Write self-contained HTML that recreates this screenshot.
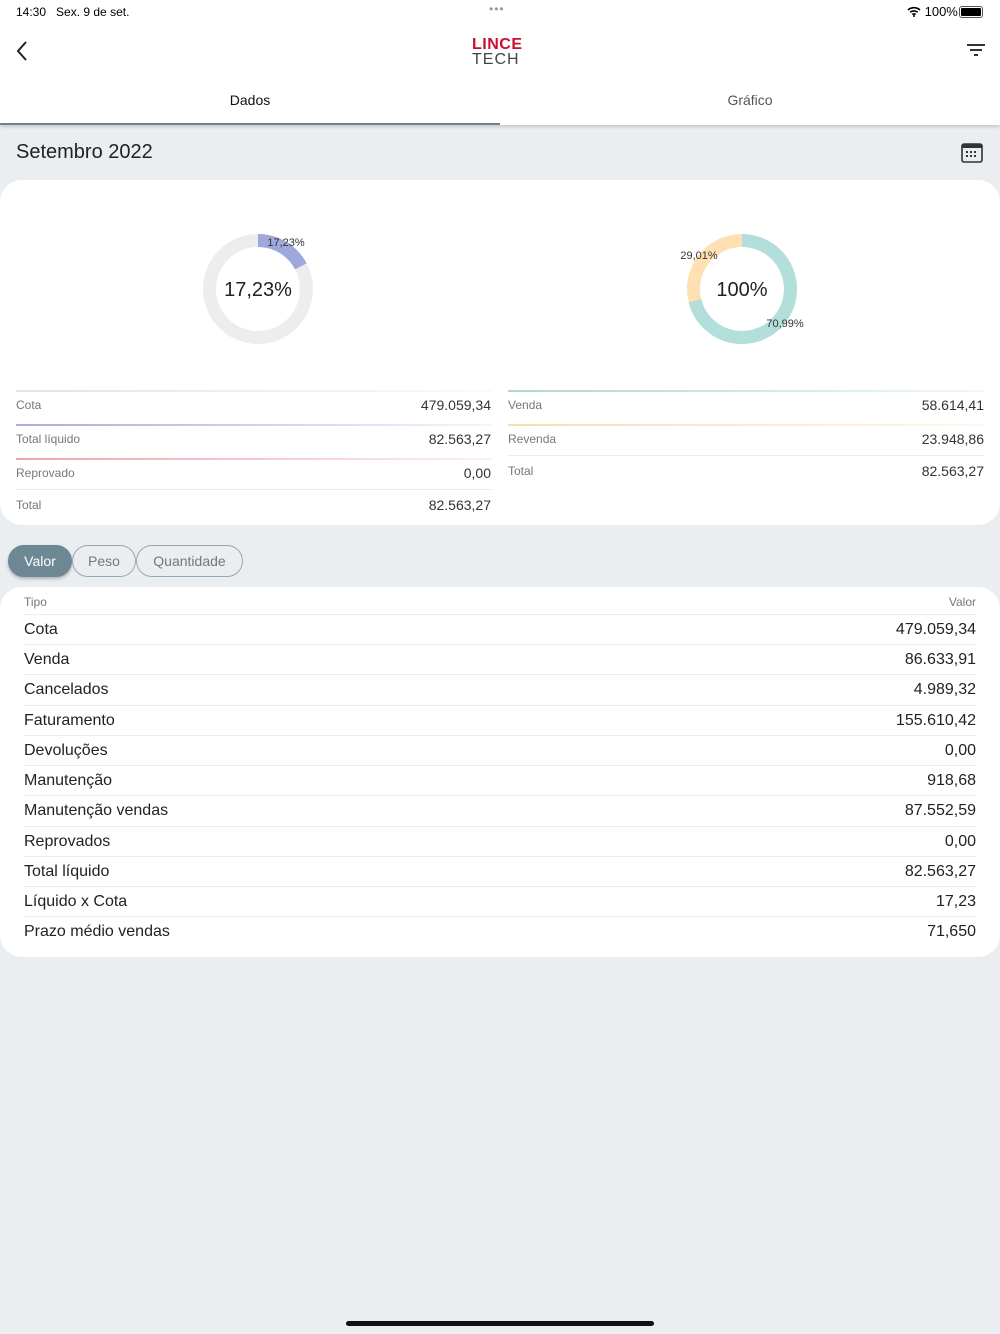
<!DOCTYPE html>
<html><head><meta charset="utf-8"><style>
*{margin:0;padding:0;box-sizing:border-box}
body{width:1000px;height:1334px;background:#eaeef1;font-family:"Liberation Sans",sans-serif;color:#222;position:relative;overflow:hidden}
.abs{position:absolute}
.hdr{position:absolute;left:0;top:0;width:1000px;height:125px;background:#fff;box-shadow:0 2px 3px rgba(0,0,0,.15)}
.card{position:absolute;left:0;width:1000px;background:#fff;border-radius:22px}
.lbl{position:absolute;font-size:12px;color:#777}
.val{position:absolute;font-size:14px;color:#333;text-align:right}
.ln{position:absolute;height:2px}
.row{position:absolute;left:24px;width:952px;height:30px;border-top:1px solid #eee;font-size:16px;color:#222}
.row span{position:absolute;top:6px}
.row .r{right:0}
.chip{position:absolute;top:545px;height:32px;border:1px solid #9aa7ad;border-radius:16px;font-size:14px;color:#777;text-align:center;line-height:30px}
</style></head><body>
<div class="hdr"></div>
<div class="abs" style="left:16px;top:5px;font-size:12px;color:#000">14:30&nbsp;&nbsp; Sex. 9 de set.</div>
<div class="abs" style="left:489px;top:2px;font-size:12px;color:#999;letter-spacing:1px">•••</div>
<div class="abs" style="left:907px;top:4px;font-size:13px;color:#000">
<svg width="14" height="11" viewBox="0 0 14 11" style="vertical-align:-1px"><path d="M1 4a9 9 0 0 1 12 0M3.2 6.3a6 6 0 0 1 7.6 0M5.3 8.5a3 3 0 0 1 3.4 0" stroke="#000" stroke-width="1.6" fill="none"/><circle cx="7" cy="10" r="1" fill="#000"/></svg> 100%</div>
<div class="abs" style="left:959px;top:6px;width:24px;height:12px;border:1px solid #555;border-radius:3px;padding:1px"><div style="width:100%;height:100%;background:#000;border-radius:1px"></div></div>
<svg class="abs" style="left:14px;top:40px" width="16" height="22" viewBox="0 0 16 22"><path d="M12 2 L4 11 L12 20" stroke="#222" stroke-width="2" fill="none"/></svg>
<div class="abs" style="left:472px;top:36px;font-size:16px;font-weight:bold;color:#c8102e;letter-spacing:.5px">LINCE</div>
<div class="abs" style="left:472px;top:51px;font-size:16px;color:#444;letter-spacing:1px">TECH</div>
<svg class="abs" style="left:966px;top:43px" width="20" height="14" viewBox="0 0 20 14"><path d="M1 2h18M4 7h12M8 12h4" stroke="#333" stroke-width="2"/></svg>
<div class="abs" style="left:0;top:92px;width:500px;text-align:center;font-size:14px;color:#111">Dados</div>
<div class="abs" style="left:500px;top:92px;width:500px;text-align:center;font-size:14px;color:#555">Gráfico</div>
<div class="abs" style="left:0;top:123px;width:500px;height:2px;background:#6b8491"></div>
<div class="abs" style="left:16px;top:141px;font-size:20px;color:#222">Setembro 2022</div>
<svg class="abs" style="left:961px;top:143px" width="22" height="20" viewBox="0 0 22 20"><rect x="1" y="1" width="20" height="18" rx="2" fill="none" stroke="#333" stroke-width="1.6"/><rect x="1" y="1" width="20" height="4" fill="#333"/><g fill="#333"><rect x="5" y="8" width="2" height="2"/><rect x="9" y="8" width="2" height="2"/><rect x="13" y="8" width="2" height="2"/><rect x="5" y="12" width="2" height="2"/><rect x="9" y="12" width="2" height="2"/><rect x="13" y="12" width="2" height="2"/></g></svg>

<div class="card" style="top:180px;height:345px"></div>
<svg class="abs" style="left:0;top:180px" width="1000" height="200">
<circle cx="258" cy="109" r="48.5" fill="none" stroke="#ededed" stroke-width="13"/>
<circle cx="258" cy="109" r="48.5" fill="none" stroke="#9fa8da" stroke-width="13" stroke-dasharray="52.5 400" transform="rotate(-90 258 109)"/>
<text x="258" y="116" text-anchor="middle" font-size="20" fill="#222" font-family="Liberation Sans">17,23%</text>
<text x="286" y="66" text-anchor="middle" font-size="11" fill="#333" font-family="Liberation Sans">17,23%</text>
<circle cx="742" cy="109" r="48.5" fill="none" stroke="#ffe0b2" stroke-width="13"/>
<circle cx="742" cy="109" r="48.5" fill="none" stroke="#b2dfdb" stroke-width="13" stroke-dasharray="216.3 400" transform="rotate(-90 742 109)"/>
<text x="742" y="116" text-anchor="middle" font-size="20" fill="#222" font-family="Liberation Sans">100%</text>
<text x="699" y="79" text-anchor="middle" font-size="11" fill="#333" font-family="Liberation Sans">29,01%</text>
<text x="785" y="147" text-anchor="middle" font-size="11" fill="#333" font-family="Liberation Sans">70,99%</text>
</svg>

<div class="ln" style="left:16px;top:390px;width:476px;background:linear-gradient(90deg,#e4e4e4,#fafafa)"></div>
<div class="lbl" style="left:16px;top:398px">Cota</div><div class="val" style="right:509px;top:397px">479.059,34</div>
<div class="ln" style="left:16px;top:424px;width:476px;background:linear-gradient(90deg,#a7aee0,#f4f5fc)"></div>
<div class="lbl" style="left:16px;top:432px">Total líquido</div><div class="val" style="right:509px;top:431px">82.563,27</div>
<div class="ln" style="left:16px;top:458px;width:476px;background:linear-gradient(90deg,#efa3a8,#fdf0f0)"></div>
<div class="lbl" style="left:16px;top:466px">Reprovado</div><div class="val" style="right:509px;top:465px">0,00</div>
<div class="ln" style="left:16px;top:489px;width:476px;height:1px;background:#eee"></div>
<div class="lbl" style="left:16px;top:498px">Total</div><div class="val" style="right:509px;top:497px">82.563,27</div>

<div class="ln" style="left:508px;top:390px;width:476px;background:linear-gradient(90deg,#a9d9d3,#f0f9f8)"></div>
<div class="lbl" style="left:508px;top:398px">Venda</div><div class="val" style="right:16px;top:397px">58.614,41</div>
<div class="ln" style="left:508px;top:424px;width:476px;background:linear-gradient(90deg,#fcdcb0,#fff7ee)"></div>
<div class="lbl" style="left:508px;top:432px">Revenda</div><div class="val" style="right:16px;top:431px">23.948,86</div>
<div class="ln" style="left:508px;top:455px;width:476px;height:1px;background:#eee"></div>
<div class="lbl" style="left:508px;top:464px">Total</div><div class="val" style="right:16px;top:463px">82.563,27</div>

<div class="chip" style="left:8px;width:64px;background:#6e8794;border-color:#6e8794;color:#fff;box-shadow:0 2px 3px rgba(0,0,0,.25)">Valor</div>
<div class="chip" style="left:72px;width:64px">Peso</div>
<div class="chip" style="left:136px;width:107px">Quantidade</div>

<div class="card" style="top:587px;height:370px"></div>
<div class="abs" style="left:24px;top:595px;font-size:12px;color:#777">Tipo</div>
<div class="abs" style="right:24px;top:595px;font-size:12px;color:#777">Valor</div>
<div class="row" style="top:614px"><span>Cota</span><span class="r">479.059,34</span></div>
<div class="row" style="top:644px"><span>Venda</span><span class="r">86.633,91</span></div>
<div class="row" style="top:674px"><span>Cancelados</span><span class="r">4.989,32</span></div>
<div class="row" style="top:705px"><span>Faturamento</span><span class="r">155.610,42</span></div>
<div class="row" style="top:735px"><span>Devoluções</span><span class="r">0,00</span></div>
<div class="row" style="top:765px"><span>Manutenção</span><span class="r">918,68</span></div>
<div class="row" style="top:795px"><span>Manutenção vendas</span><span class="r">87.552,59</span></div>
<div class="row" style="top:826px"><span>Reprovados</span><span class="r">0,00</span></div>
<div class="row" style="top:856px"><span>Total líquido</span><span class="r">82.563,27</span></div>
<div class="row" style="top:886px"><span>Líquido x Cota</span><span class="r">17,23</span></div>
<div class="row" style="top:916px"><span>Prazo médio vendas</span><span class="r">71,650</span></div>

<div class="abs" style="left:346px;top:1321px;width:308px;height:5px;border-radius:3px;background:#111"></div>
</body></html>
